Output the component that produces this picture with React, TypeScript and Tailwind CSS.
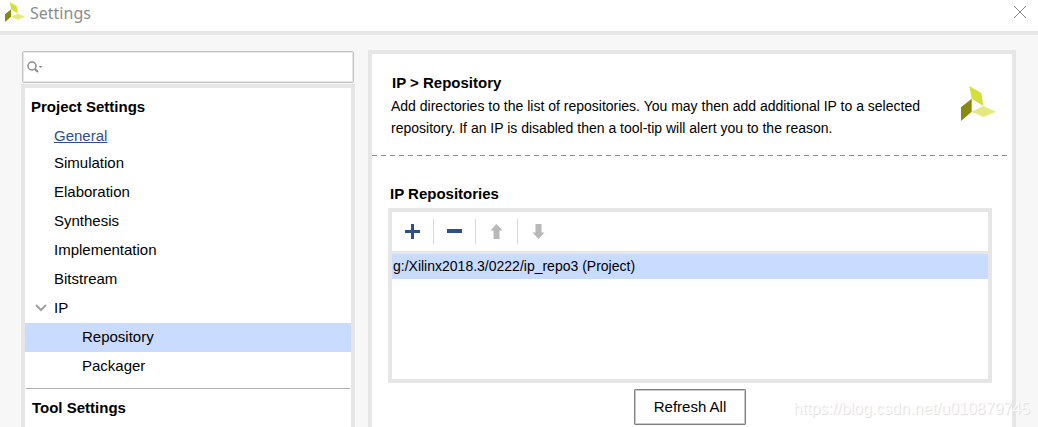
import { useState } from 'react';
import { clsx } from 'clsx';

type NavItem = { label: string; nested?: boolean; expandable?: boolean };

const PROJECT_ITEMS: NavItem[] = [
  { label: 'General' },
  { label: 'Simulation' },
  { label: 'Elaboration' },
  { label: 'Synthesis' },
  { label: 'Implementation' },
  { label: 'Bitstream' },
  { label: 'IP', expandable: true },
  { label: 'Repository', nested: true },
  { label: 'Packager', nested: true },
];

function Logo({ className }: { className?: string }) {
  return (
    <svg viewBox="0 0 105 105" className={className} aria-hidden="true">
      <polygon points="0,64 32,38 32,77 0,105" fill="#878a0c" />
      <polygon points="25,0 61,21 67,60 32,38" fill="#d5df3a" />
      <polygon points="32,77 67,60 105,77 68,93" fill="#e4ea7e" />
    </svg>
  );
}

function TitleBar() {
  return (
    <header className="flex h-[35px] shrink-0 items-start border-b-4 border-[#e6e6e6] bg-white pl-[5px] pr-[11px]">
      <Logo className="mt-0.5 h-5 w-5" />
      <h1 className="ml-[5px] flex-1 font-['Noto_Sans',sans-serif] text-[16px] leading-[26px] text-[#8c8c8c]">Settings</h1>
      <button type="button" aria-label="Close" className="mt-[5px]">
        <svg width="14" height="14" viewBox="0 0 14 14" stroke="#858585" fill="none">
          <path d="M1 1l12 12M13 1L1 13" />
        </svg>
      </button>
    </header>
  );
}

function SearchBox() {
  return (
    <label className="mx-px flex h-8 items-center rounded-[2px] border border-[#c2c2c2] bg-white pl-1 outline-1 -outline-offset-2 outline-[#e6e6e6]">
      <svg width="16" height="12" viewBox="0 0 16 12" fill="none" stroke="#8a8a8a" aria-hidden="true">
        <circle cx="5" cy="5" r="4" strokeWidth="1.5" />
        <path d="M8 8l3 3" strokeWidth="2" />
        <path d="M11.5 5h4l-2 2z" fill="#8a8a8a" stroke="none" />
      </svg>
      <input type="text" aria-label="Search settings" className="ml-1 min-w-0 flex-1 outline-none" />
    </label>
  );
}

function Sidebar() {
  const [selected, setSelected] = useState('Repository');

  return (
    <aside className="flex w-[334px] shrink-0 flex-col gap-px">
      <SearchBox />
      <nav className="flex-1 border-4 border-b-0 border-[#e6e6e6] bg-white">
        <h2 className="pl-1.5 pt-1 font-bold leading-[30px]">Project Settings</h2>
        <ul>
          {PROJECT_ITEMS.map(({ label, nested, expandable }) => (
            <li key={label}>
              {label === 'General' ? (
                <a href="#general" className="block pl-[29px] pt-px leading-[26px] text-[#2f4f87] underline underline-offset-1">
                  {label}
                </a>
              ) : (
                <button
                  type="button"
                  onClick={() => setSelected(label)}
                  className={clsx(
                    'flex w-full items-center pb-px leading-[28px]',
                    nested ? 'pl-[57px]' : expandable ? 'pl-2.5' : 'pl-[29px]',
                    selected === label && 'bg-[#c9dcff]'
                  )}>
                  {expandable && (
                    <svg width="12" height="8" viewBox="0 0 12 8" className="mr-[7px]" fill="none" stroke="#a0a0a0" strokeWidth="2">
                      <path d="M1 1l5 5 5-5" />
                    </svg>
                  )}
                  {label}
                </button>
              )}
            </li>
          ))}
        </ul>
        <hr className="mx-px mt-[7px] border-[#b0b0b0]" />
        <h2 className="pl-[7px] pt-1 font-bold leading-[29px]">Tool Settings</h2>
      </nav>
    </aside>
  );
}

const TOOLS = [
  { name: 'Add repository', path: 'M6 0h3v6h6v3H9v6H6V9H0V6h6z', enabled: true },
  { name: 'Remove repository', path: 'M0 5h15v4H0z', enabled: true },
  { name: 'Move up', path: 'M7.5 0L13.5 6.5h-3V15h-6V6.5h-3z', enabled: false },
  { name: 'Move down', path: 'M7.5 15L1.5 8.5h3V0h6v8.5h3z', enabled: false },
];

function Toolbar() {
  return (
    <div className="flex h-[42px] items-center border-b-3 border-[#e6e6e6]">
      {TOOLS.map(({ name, path, enabled }, i) => (
        <button
          key={name}
          type="button"
          aria-label={name}
          disabled={!enabled}
          className={clsx(
            'flex h-[25px] w-[42px] items-center justify-center border-r',
            i < TOOLS.length - 1 ? 'border-[#d9d9d9]' : 'border-transparent',
            enabled ? 'text-[#2f4f87]' : 'text-[#b8b8b8]'
          )}>
          <svg width="15" height="15" viewBox="0 0 15 15" fill="currentColor">
            <path d={path} />
          </svg>
        </button>
      ))}
    </div>
  );
}

function RepositoryPanel() {
  return (
    <main className="min-w-0 flex-1 border-4 border-b-0 border-[#e6e6e6] bg-white">
      <div className="flex h-[101px] items-start pl-[19px] pr-4 pt-[18px]">
        <div className="flex-1">
          <h2 className="pl-px font-bold leading-[22px]">IP &gt; Repository</h2>
          <p className="mt-px max-w-[560px] text-[14px] leading-[22px]">
            Add directories to the list of repositories. You may then add additional IP to a selected repository. If an
            IP is disabled then a tool-tip will alert you to the reason.
          </p>
        </div>
        <Logo className="mt-[14px] h-[35px] w-[35px]" />
      </div>
      <div className="mr-1 h-px bg-[repeating-linear-gradient(to_right,#8c8c8c_0_5px,transparent_5px_9px)]" />

      <section className="pl-4 pr-5 pt-7">
        <h3 className="pl-0.5 font-bold leading-[20px]">IP Repositories</h3>
        <div className="mt-1 h-[175px] border-4 border-[#e6e6e6]">
          <Toolbar />
          <ul>
            <li className="bg-[#c9dcff] pb-px pl-px text-[14px] leading-[24px]">g:/Xilinx2018.3/0222/ip_repo3 (Project)</li>
          </ul>
        </div>
        <div className="mt-1.5 flex justify-center">
          <button type="button" className="h-9 rounded-[1px] border border-[#808080] px-[19px] outline-1 -outline-offset-2 outline-[#c8c8c8]">
            Refresh All
          </button>
        </div>
      </section>
    </main>
  );
}

export default function App() {
  return (
    <div className="relative flex h-screen flex-col overflow-hidden bg-[#f7f7f7] font-['Liberation_Sans',Arial,sans-serif] text-[15px] text-black">
      <TitleBar />
      <div className="flex min-h-0 flex-1 gap-[13px] pl-[21px] pr-[22px] pt-[15px]">
        <div className="flex pt-px">
          <Sidebar />
        </div>
        <RepositoryPanel />
      </div>
      <span className="pointer-events-none absolute bottom-1.5 right-2 text-[16px] leading-6 text-white/80 [text-shadow:1px_1px_1px_#dcdcdc]">
        https://blog.csdn.net/u010879745
      </span>
    </div>
  );
}
